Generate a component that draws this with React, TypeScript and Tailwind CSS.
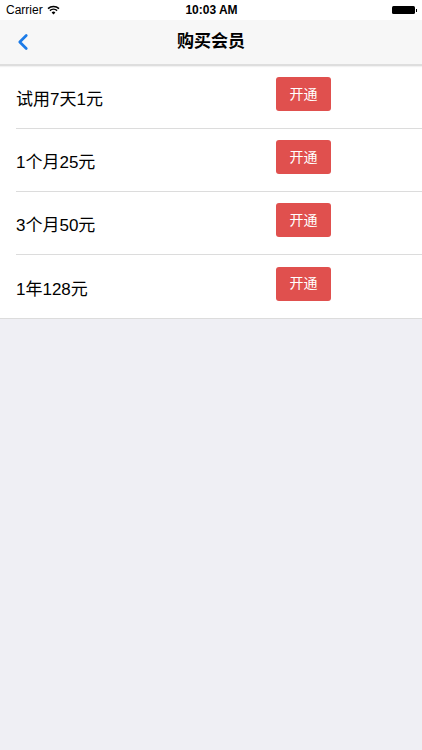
import { ChevronLeft } from "lucide-react";

const plans = ["试用7天1元", "1个月25元", "3个月50元", "1年128元"];

function StatusBar() {
  return (
    <div className="h-[20px] bg-white flex items-center justify-between pl-[6px] pr-[5px] text-[12px] text-black">
      <div className="flex items-center gap-[4px] w-[120px]">
        <span>Carrier</span>
        {/* wifi */}
        <svg width="13" height="10" viewBox="0 0 13 10" className="mt-[-1px]">
          <path d="M6.5 9.5 L4.6 7.4 A2.8 2.8 0 0 1 8.4 7.4 Z" fill="black" />
          <path d="M2.9 5.6 A5.3 5.3 0 0 1 10.1 5.6" stroke="black" strokeWidth="1.5" fill="none" />
          <path d="M1 3.6 A8 8 0 0 1 12 3.6" stroke="black" strokeWidth="1.5" fill="none" />
        </svg>
      </div>
      <span className="font-semibold">10:03 AM</span>
      <div className="w-[120px] flex justify-end items-center">
        <div className="w-[23px] h-[8px] bg-black rounded-[1.5px]" />
        <div className="w-[1.5px] h-[3px] bg-black ml-[0.5px]" />
      </div>
    </div>
  );
}

export default function App() {
  return (
    <div
      className="w-[422px] h-[750px] bg-[#efeff4] flex flex-col overflow-hidden"
      style={{ fontFamily: '"Liberation Sans", "Noto Sans CJK SC", sans-serif' }}
    >
      <StatusBar />

      {/* Nav bar */}
      <div className="h-[44px] bg-[#f7f7f7] flex items-center relative border-b-2 border-[#dedede] box-content shadow-[0_1px_1px_rgba(0,0,0,0.05)]">
        <ChevronLeft className="absolute left-[10px] text-[#1b7be8]" size={26} strokeWidth={2.5} />
        <h1 className="flex-1 text-center text-[17px] font-semibold text-black">购买会员</h1>
      </div>

      {/* Plan list */}
      <div className="bg-white border-b border-[#dcdcdc]">
        {plans.map((plan, i) => (
          <div key={plan} className="pl-[16px]">
            <div
              className={
                "h-[63px] flex items-center justify-between pr-[91px] " +
                (i < plans.length - 1 ? "border-b border-[#dcdcdc]" : "")
              }
            >
              <span className="text-[17px] text-black pt-[6px]">{plan}</span>
              <button className="w-[55px] h-[34px] rounded-[3px] bg-[#e0504e] text-white text-[14px] mb-[6px]">
                开通
              </button>
            </div>
          </div>
        ))}
      </div>
    </div>
  );
}
